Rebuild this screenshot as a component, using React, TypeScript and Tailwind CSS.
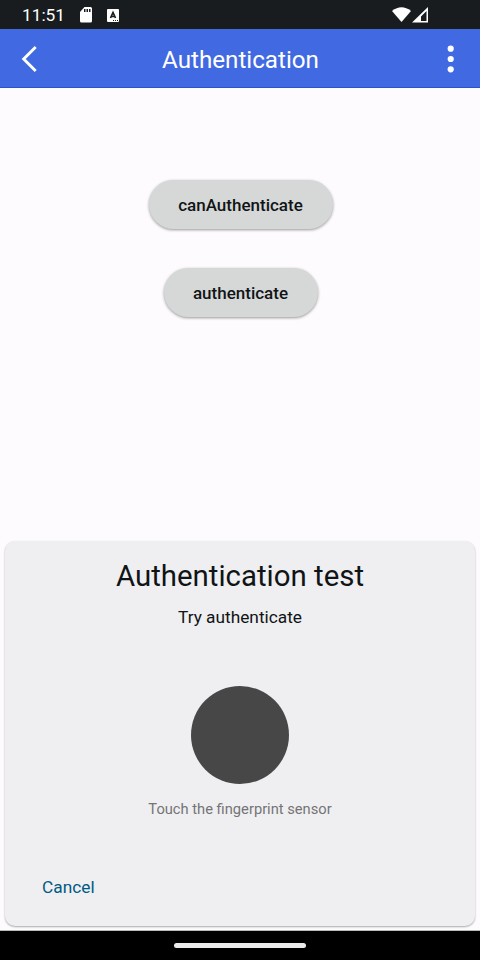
export default function App() {
  return (
    <div className="flex h-[960px] w-[480px] flex-col overflow-hidden bg-[#fdfbfd] font-['Roboto',sans-serif] text-[#111416]">
      <div className="flex h-[29px] shrink-0 items-center bg-[#191c1e] pl-[22px] text-white">
        <span className="w-[43px] pt-px text-[17.300px] leading-[29px] whitespace-nowrap">11:51</span>
        <svg className="mt-px ml-[14px]" width="14" height="16" viewBox="0 0 14 16"><path fillRule="evenodd" fill="#fff" d="M5.500 0H11.500q1.500 0 1.500 1.500v12.500q0 1.500-1.500 1.500H2.500q-1.500 0-1.500-1.500V5zM5 2v3h1.500V2zM7.500 2v3H9V2zM10 2v3h1.500V2z" /></svg>
        <svg className="mt-px ml-[14px]" width="12" height="13" viewBox="0 0 12 13"><rect width="12" height="13" rx="1" fill="#fff" /><path d="M3.500 9L6 3.500 8.500 9M4.500 7.500h3" stroke="#191c1e" fill="none" strokeWidth="1.700" /><path d="M6 11.500h1M8 11.500h1M10 11.500h1" stroke="#191c1e" /></svg>
        <svg className="ml-auto mr-[52px]" width="36" height="16" viewBox="0 0 36 16"><path fill="#fff" d="M0 4Q9.500-3.500 19 4L9.500 15z" /><path fillRule="evenodd" fill="#fff" d="M36 0v15.500H20zM34.500 4L29 9.500V14h5.500z" /></svg>
      </div>
      <header className="flex h-[59px] shrink-0 items-center justify-between border-b border-[#2854d0] bg-[#4169e1] pr-[20px] pl-[21px] text-white">
        <svg className="mt-px" width="18" height="28" viewBox="0 0 18 28"><path d="M14.700 2L2.700 14l12 12" fill="none" stroke="#fff" strokeWidth="2.900" /></svg>
        <h1 className="pt-[3px] text-[24.200px] leading-8">Authentication</h1>
        <svg className="mt-px" width="18" height="28" viewBox="0 0 18 28" fill="#fff"><circle cx="8.700" cy="3.700" r="3.100" /><circle cx="8.700" cy="14" r="3.100" /><circle cx="8.700" cy="24.300" r="3.100" /></svg>
      </header>
      <main className="flex h-[453px] shrink-0 flex-col items-center gap-[39px] pt-[92px] pl-px">
        <button className="h-[49px] w-[184px] rounded-full bg-[#d6d8d7] pt-[2px] text-[17px] font-medium shadow-[0_1px_3px_#0006]">canAuthenticate</button>
        <button className="h-[49px] w-[154px] rounded-full bg-[#d6d8d7] pt-[2px] text-[17px] font-medium shadow-[0_1px_3px_#0006]">authenticate</button>
      </main>
      <section className="mx-[5px] flex h-[385px] shrink-0 flex-col items-center rounded-[10px] bg-[#efeff1] pt-[17px] shadow-[0_1px_2px_#0005]">
        <h2 className="text-[29.400px] leading-[36px]">Authentication test</h2>
        <p className="mt-[12px] text-[17.300px] leading-[22px]">Try authenticate</p>
        <div className="mt-[58px] h-[98px] w-[98px] shrink-0 rounded-full bg-[#474747]" />
        <p className="mt-[15px] text-[14.700px] leading-[20px] text-[#747476]">Touch the fingerprint sensor</p>
        <button className="mt-[56px] ml-[37px] self-start text-[17.300px] leading-[24px] text-[#005b83]">Cancel</button>
      </section>
      <nav className="mt-auto flex h-[30px] shrink-0 items-center justify-center border-t border-[#b9bbbb] bg-black"><div className="h-[5px] w-[132px] rounded-full bg-[#ebebeb]" /></nav>
    </div>
  );
}
